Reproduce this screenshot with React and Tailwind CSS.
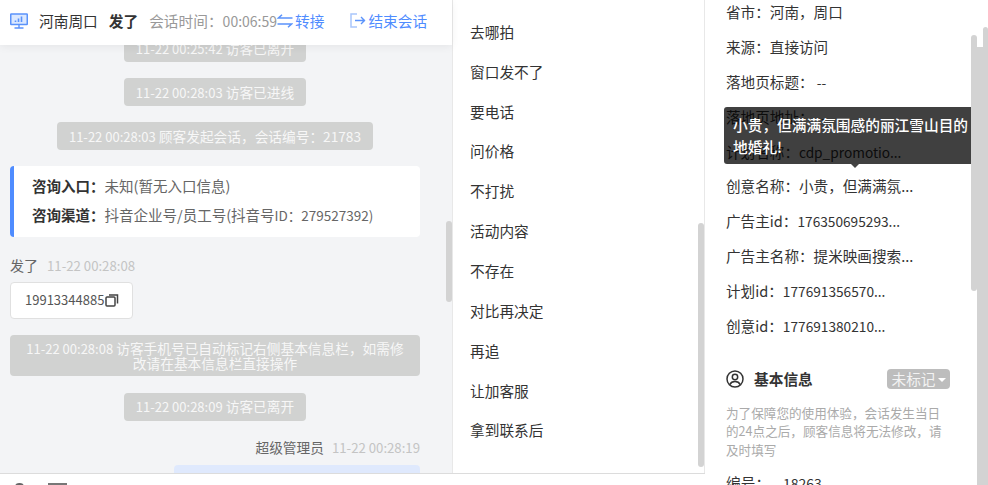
const fontStack = { fontFamily: '"Noto Sans CJK SC", sans-serif' }

const replies = ['去哪拍', '窗口发不了', '要电话', '问价格', '不打扰', '活动内容', '不存在', '对比再决定', '再追', '让加客服', '拿到联系后']

const fields = [
  ['省市：河南，周口'],
  ['来源：直接访问'],
  ['落地页标题：', ' --'],
  ['落地页地址：', ' --'],
  ['计划名称：', 'cdp_promotio...'],
  ['创意名称：小贵，但满满氛...'],
  ['广告主id：', '176350695293...'],
  ['广告主名称：提米映画搜索...'],
  ['计划id：', '177691356570...'],
  ['创意id：', '177691380210...'],
]

function SystemMsg({ time, children, wide }) {
  return (
    <div className={`mx-auto flex items-center justify-center rounded-sm bg-[#d1d2d1] text-center text-[13.7px] text-[#f7f7f7] ${wide ? 'w-[410px] h-[41px] px-4 leading-[14px]' : 'w-fit h-7 px-3'}`}>
      <span><span className="text-[13px]">{time}</span> {children}</span>
    </div>
  )
}

function MonitorIcon() {
  return (
    <svg width="18" height="16" viewBox="0 0 18 16" fill="none" className="shrink-0">
      <rect x="0.75" y="1" width="16.5" height="10.5" rx="0.5" fill="#dbe8ff" stroke="#5b93fb" strokeWidth="1.5" />
      <path d="M5.5 9V7.5M8.5 9V5.5M11.5 9V3.5" stroke="#5b93fb" strokeWidth="1.6" />
      <path d="M9 12v3M4.5 15h9" stroke="#5b93fb" strokeWidth="1.4" />
    </svg>
  )
}

function TransferIcon() {
  return (
    <svg width="16" height="14" viewBox="0 0 16 14" fill="none" className="shrink-0">
      <path d="M15.5 4H1.5L5 0.8" stroke="#5b93fb" strokeWidth="1.5" />
      <path d="M0.5 10H14.5L11 13.2" stroke="#5b93fb" strokeWidth="1.5" />
    </svg>
  )
}

function ExitIcon() {
  return (
    <svg width="16" height="15" viewBox="0 0 16 15" fill="none" className="shrink-0">
      <path d="M7 1H1v13h6" stroke="#a9c6fb" strokeWidth="1.5" />
      <path d="M5 7.5h10M11 4l3.5 3.5-3.5 3.5" stroke="#5b93fb" strokeWidth="1.4" />
    </svg>
  )
}

function CopyIcon() {
  return (
    <svg width="14" height="13" viewBox="0 0 14 13" fill="none" className="ml-px shrink-0">
      <rect x="1" y="3" width="9" height="9" rx="1" stroke="#444" strokeWidth="1.5" />
      <path d="M4 1h8.5v8.5" stroke="#444" strokeWidth="1.5" />
    </svg>
  )
}

function UserCircleIcon() {
  return (
    <svg width="18" height="18" viewBox="0 0 18 18" fill="none" className="shrink-0">
      <circle cx="9" cy="9" r="8" stroke="#333" strokeWidth="1.5" />
      <circle cx="9" cy="7" r="2.7" stroke="#333" strokeWidth="1.5" />
      <path d="M3.8 14.6c1-2.2 3-3 5.2-3s4.2.8 5.2 3" stroke="#333" strokeWidth="1.5" />
    </svg>
  )
}

export default function App() {
  return (
    <div className="flex h-[485px] w-[988px] overflow-hidden bg-white text-[14.7px] leading-5 text-[#333]" style={fontStack}>
      {/* chat + quick replies */}
      <div className="flex w-[705px] shrink-0 flex-col">
        <div className="flex h-[473px] overflow-hidden">
          {/* chat */}
          <div className="relative flex w-[452px] shrink-0 flex-col bg-[#f3f4f6]">
            <div className="relative z-10 flex h-[45px] shrink-0 items-center whitespace-nowrap bg-white pb-1 pl-[10px] shadow-[0_2px_8px_rgba(0,0,0,0.06)]">
              <MonitorIcon />
              <span className="ml-[11px]">河南周口</span>
              <span className="ml-[11px] font-bold">发了</span>
              <span className="ml-[11px] text-[#999]">会话时间：<span className="text-sm">00:06:59</span></span>
              <TransferIcon />
              <span className="ml-[2px] text-[#4f8cff]">转接</span>
              <span className="ml-[26px]"><ExitIcon /></span>
              <span className="ml-[2px] text-[#4f8cff]">结束会话</span>
            </div>

            <div className="-mt-[11px] flex flex-col whitespace-nowrap pl-[10px] pr-8">
              <div className="flex flex-col gap-4">
                <SystemMsg time="11-22 00:25:42">访客已离开</SystemMsg>
                <SystemMsg time="11-22 00:28:03">访客已进线</SystemMsg>
                <SystemMsg time="11-22 00:28:03">顾客发起会话，会话编号：21783</SystemMsg>
              </div>

              <div className="mt-4 flex h-[71px] flex-col justify-center gap-[9px] rounded-sm border-l-4 border-[#4f8cff] bg-white pb-[3px] pl-[18px] text-[14.5px]">
                <div><span className="font-bold">咨询入口：</span><span className="text-[#666]">未知(暂无入口信息)</span></div>
                <div><span className="font-bold">咨询渠道：</span><span className="text-[#666]">抖音企业号/员工号(抖音号<span className="text-[13.5px]">ID：279527392)</span></span></div>
              </div>

              <div className="mt-[18px] text-sm text-[#666]">发了<span className="ml-[9px] text-[13.2px] text-[#c4c4c4]">11-22 00:28:08</span></div>
              <div className="mt-[6px] flex h-[37px] w-[123px] items-center rounded border border-[#e0e0e0] bg-white pl-[14px] text-[13px] text-[#555]">
                19913344885<CopyIcon />
              </div>

              <div className="mt-4 whitespace-normal">
                <SystemMsg wide time="11-22 00:28:08">访客手机号已自动标记右侧基本信息栏，如需修改请在基本信息栏直接操作</SystemMsg>
              </div>
              <div className="mt-[17px]">
                <SystemMsg time="11-22 00:28:09">访客已离开</SystemMsg>
              </div>

              <div className="mt-4 text-right text-[13.7px] text-[#666]">超级管理员<span className="ml-2 text-[13.2px] text-[#c4c4c4]">11-22 00:28:19</span></div>
              <div className="ml-auto mt-[7px] h-10 w-[246px] rounded bg-[#dfe9fd]" />
            </div>

            <div className="absolute right-0 top-[221px] z-20 h-[81px] w-[6px] rounded-sm bg-[#d3d3d3]" />
          </div>

          {/* quick replies */}
          <div className="relative flex-1 border-x border-[#e8e8e8] pl-[17px] pt-3">
            {replies.map(text => (
              <div key={text} className="flex h-[39.85px] items-center">{text}</div>
            ))}
            <div className="absolute right-0 top-[223px] h-[244px] w-[6px] rounded-sm bg-[#d3d3d3]" />
          </div>
        </div>

        {/* editor toolbar, cut off by the window */}
        <div className="flex h-3 gap-6 border-t border-[#dcdcdc] pl-[15px] pt-[9px]">
          <div className="h-1 w-[9px] rounded-t-full bg-[#666]" />
          <div className="h-1 w-[19px] bg-[#777]" />
        </div>
      </div>

      {/* visitor info */}
      <div className="relative flex-1 overflow-hidden pl-[21px] pr-[38px]">
        <div className="-mt-[5px] whitespace-nowrap text-[14.6px]">
          {fields.map(([label, value]) => (
            <div key={label} className="flex h-[34.8px] items-center whitespace-pre">
              {label}<span className="text-[13.7px]">{value}</span>
            </div>
          ))}
        </div>

        <div className="mt-[22px] flex h-[28px] items-center">
          <UserCircleIcon />
          <span className="ml-[10px] font-bold">基本信息</span>
          <div className="ml-auto flex h-5 w-[63px] items-center justify-center rounded-sm bg-[#bdbdbd] text-[#f3f3f3]">
            未标记
            <span className="ml-[2px] mt-[2px] border-x-4 border-t-4 border-x-transparent border-t-white" />
          </div>
        </div>
        <p className="mt-[11px] text-[12.6px] leading-[18.5px] text-[#aaa]">为了保障您的使用体验，会话发生当日的24点之后，顾客信息将无法修改，请及时填写</p>
        <div className="mt-[14px] flex"><span className="w-[57px]">编号：</span><span className="text-sm">18263</span></div>

        {/* tooltip */}
        <div className="absolute left-[19px] top-[107px] h-[57px] w-[263px] rounded-[3px] bg-black/75 px-[9px] py-[7px] font-medium leading-[22px] text-white">
          小贵，但满满氛围感的丽江雪山目的地婚礼!
          <span className="absolute left-[127px] top-full border-x-4 border-t-4 border-x-transparent border-t-[#444]" />
        </div>

        {/* scrollbars */}
        <div className="absolute bottom-0 right-0 top-[47px] w-[11px] bg-[#d3d3d3]" />
        <div className="absolute bottom-0 right-0 top-[27px] w-[5px] rounded-t-sm bg-[#d3d3d3]" />
        <div className="absolute right-[11px] top-[35px] h-[256px] w-[6px] rounded-sm bg-[#d3d3d3]" />
      </div>
    </div>
  )
}
